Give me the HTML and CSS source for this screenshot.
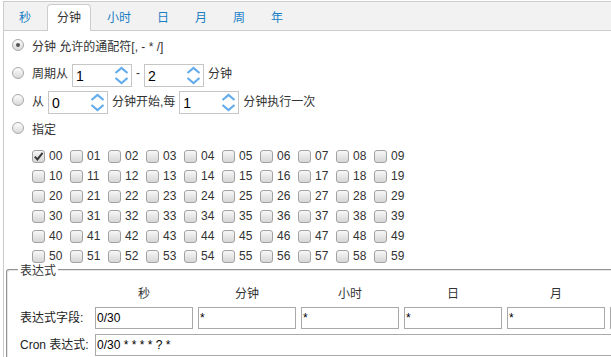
FILE: index.html
```html
<!DOCTYPE html>
<html lang="zh-CN">
<head>
<meta charset="utf-8">
<title>Cron 表达式</title>
<link rel="stylesheet" href="styles.css">
</head>
<body>
<div class="page">
  <div class="tabs">
    <span class="tab">秒</span>
    <span class="tab active">分钟</span>
    <span class="tab">小时</span>
    <span class="tab">日</span>
    <span class="tab">月</span>
    <span class="tab">周</span>
    <span class="tab">年</span>
  </div>

  <div class="opt r1"><span class="radio checked"></span><span>分钟 允许的通配符[, - * /]</span></div>
  <div class="opt r2"><span class="radio"></span><span>周期从</span>
    <span class="spin"><span class="val">1</span><svg class="arr" width="17" height="21" viewBox="0 0 17 21"><polyline points="1.5,8 7.5,3 13.5,8"/><polyline points="1.5,13 7.5,18 13.5,13"/></svg></span>
    <span>-</span>
    <span class="spin"><span class="val">2</span><svg class="arr" width="17" height="21" viewBox="0 0 17 21"><polyline points="1.5,8 7.5,3 13.5,8"/><polyline points="1.5,13 7.5,18 13.5,13"/></svg></span>
    <span>分钟</span>
  </div>
  <div class="opt r3"><span class="radio"></span><span>从</span>
    <span class="spin"><span class="val">0</span><svg class="arr" width="17" height="21" viewBox="0 0 17 21"><polyline points="1.5,8 7.5,3 13.5,8"/><polyline points="1.5,13 7.5,18 13.5,13"/></svg></span>
    <span>分钟开始,每</span>
    <span class="spin"><span class="val">1</span><svg class="arr" width="17" height="21" viewBox="0 0 17 21"><polyline points="1.5,8 7.5,3 13.5,8"/><polyline points="1.5,13 7.5,18 13.5,13"/></svg></span>
    <span>分钟执行一次</span>
  </div>
  <div class="opt r4"><span class="radio"></span><span>指定</span></div>

  <div class="grid">
    <span class="cell"><span class="cb on"><svg width="11" height="11" viewBox="0 0 11 11"><path d="M1.8 5.6 L4.4 8.4 L9.6 1.8"/></svg></span>00</span>
    <span class="cell"><span class="cb"></span>01</span>
    <span class="cell"><span class="cb"></span>02</span>
    <span class="cell"><span class="cb"></span>03</span>
    <span class="cell"><span class="cb"></span>04</span>
    <span class="cell"><span class="cb"></span>05</span>
    <span class="cell"><span class="cb"></span>06</span>
    <span class="cell"><span class="cb"></span>07</span>
    <span class="cell"><span class="cb"></span>08</span>
    <span class="cell"><span class="cb"></span>09</span>
    <span class="cell"><span class="cb"></span>10</span>
    <span class="cell"><span class="cb"></span>11</span>
    <span class="cell"><span class="cb"></span>12</span>
    <span class="cell"><span class="cb"></span>13</span>
    <span class="cell"><span class="cb"></span>14</span>
    <span class="cell"><span class="cb"></span>15</span>
    <span class="cell"><span class="cb"></span>16</span>
    <span class="cell"><span class="cb"></span>17</span>
    <span class="cell"><span class="cb"></span>18</span>
    <span class="cell"><span class="cb"></span>19</span>
    <span class="cell"><span class="cb"></span>20</span>
    <span class="cell"><span class="cb"></span>21</span>
    <span class="cell"><span class="cb"></span>22</span>
    <span class="cell"><span class="cb"></span>23</span>
    <span class="cell"><span class="cb"></span>24</span>
    <span class="cell"><span class="cb"></span>25</span>
    <span class="cell"><span class="cb"></span>26</span>
    <span class="cell"><span class="cb"></span>27</span>
    <span class="cell"><span class="cb"></span>28</span>
    <span class="cell"><span class="cb"></span>29</span>
    <span class="cell"><span class="cb"></span>30</span>
    <span class="cell"><span class="cb"></span>31</span>
    <span class="cell"><span class="cb"></span>32</span>
    <span class="cell"><span class="cb"></span>33</span>
    <span class="cell"><span class="cb"></span>34</span>
    <span class="cell"><span class="cb"></span>35</span>
    <span class="cell"><span class="cb"></span>36</span>
    <span class="cell"><span class="cb"></span>37</span>
    <span class="cell"><span class="cb"></span>38</span>
    <span class="cell"><span class="cb"></span>39</span>
    <span class="cell"><span class="cb"></span>40</span>
    <span class="cell"><span class="cb"></span>41</span>
    <span class="cell"><span class="cb"></span>42</span>
    <span class="cell"><span class="cb"></span>43</span>
    <span class="cell"><span class="cb"></span>44</span>
    <span class="cell"><span class="cb"></span>45</span>
    <span class="cell"><span class="cb"></span>46</span>
    <span class="cell"><span class="cb"></span>47</span>
    <span class="cell"><span class="cb"></span>48</span>
    <span class="cell"><span class="cb"></span>49</span>
    <span class="cell"><span class="cb"></span>50</span>
    <span class="cell"><span class="cb"></span>51</span>
    <span class="cell"><span class="cb"></span>52</span>
    <span class="cell"><span class="cb"></span>53</span>
    <span class="cell"><span class="cb"></span>54</span>
    <span class="cell"><span class="cb"></span>55</span>
    <span class="cell"><span class="cb"></span>56</span>
    <span class="cell"><span class="cb"></span>57</span>
    <span class="cell"><span class="cb"></span>58</span>
    <span class="cell"><span class="cb"></span>59</span>
  </div>

  <fieldset class="expr">
    <legend>表达式</legend>
    <div class="fields">
      <span></span>
      <span class="head">秒</span>
      <span class="head">分钟</span>
      <span class="head">小时</span>
      <span class="head">日</span>
      <span class="head">月</span>
      <span class="head"></span>

      <span class="lbl">表达式字段:</span>
      <span class="box">0/30</span>
      <span class="box">*</span>
      <span class="box">*</span>
      <span class="box">*</span>
      <span class="box">*</span>
      <span class="box"></span>

      <span class="lbl">Cron 表达式:</span>
      <span class="box cron">0/30 * * * * ? *</span>
    </div>
  </fieldset>
</div>
</body>
</html>
```

FILE: styles.css
```css
html, body {
  margin: 0;
  padding: 0;
  overflow: hidden;
  background: #fff;
}

body {
  font-family: "Liberation Sans", "Noto Sans CJK SC", sans-serif;
  font-size: 12px;
  color: #333;
}

.page {
  margin: 1px 0 0 3px;
  border-left: 1px solid #ccc;
  width: 900px;
  height: 420px;
}

/* tabs */
.tabs {
  display: flex;
  align-items: flex-end;
  gap: 6px;
  height: 28px;
  padding-left: 5px;
  border-top: 1px solid #ccc;
  border-bottom: 1px solid #ccc;
  background: #f2f2f2;
}

.tab {
  font-family: "Noto Sans CJK SC", sans-serif;
  font-size: 12px;
  line-height: 24px;
  padding: 0 9px 2px;
  margin-bottom: -1px;
  border: 1px solid transparent;
  border-bottom: 0;
  border-radius: 4px 4px 0 0;
  color: #1a7ec6;
}

.tab.active {
  background: #fff;
  border-color: #ccc;
  color: #333;
}

/* option rows */
.opt {
  display: flex;
  align-items: center;
  gap: 4px;
  padding-left: 8px;
}

.r1 { height: 28px; }
.r2 { height: 27px; }
.r3 { height: 28px; }
.r4 { height: 28px; }

.radio {
  width: 12px;
  height: 12px;
  box-sizing: border-box;
  border: 1px solid #a8a8a8;
  border-radius: 50%;
  background: linear-gradient(#fdfdfd, #d9d9d9);
  margin-right: 4px;
  display: flex;
  align-items: center;
  justify-content: center;
}

.radio.checked::after {
  content: "";
  width: 4px;
  height: 4px;
  border-radius: 50%;
  background: #555;
}

.spin {
  display: flex;
  width: 60px;
  height: 23px;
  box-sizing: border-box;
  margin-top: 5px;
  border: 1px solid #c6c6c6;
  background: #fff;
}

.spin .val {
  flex: 1;
  padding-left: 3px;
  font-size: 14px;
  line-height: 22px;
  color: #000;
}

.arr polyline {
  fill: none;
  stroke: #63acec;
  stroke-width: 2.2;
}

/* minute grid */
.grid {
  display: grid;
  grid-template-columns: repeat(10, 38px);
  grid-auto-rows: 20px;
  padding-left: 28px;
  margin-top: 4px;
}

.cell {
  display: flex;
  align-items: center;
  gap: 4px;
  color: #333;
}

.cb {
  width: 13px;
  height: 13px;
  box-sizing: border-box;
  border: 1px solid #a2a2a2;
  border-radius: 3px;
  background: linear-gradient(#f7f7f7, #d6d6d6);
  display: flex;
  align-items: center;
  justify-content: center;
}

.cb svg path {
  fill: none;
  stroke: #3a3a3a;
  stroke-width: 2;
}

/* expression fieldset */
.expr {
  margin: -3px 0 0 2px;
  padding: 6px 12px 4px;
  border: 2px groove #e6e6e6;
  border-radius: 3px;
  width: 860px;
  box-sizing: border-box;
}

.expr legend {
  font-family: "Noto Sans CJK SC", sans-serif;
  font-size: 12px;
  line-height: 14px;
  padding: 0 2px;
  margin-left: -2px;
  color: #333;
}

.fields {
  display: grid;
  grid-template-columns: 70px repeat(6, 98px);
  grid-template-rows: 19px 22px 22px;
  column-gap: 5px;
  row-gap: 5px;
}

.head {
  font-family: "Noto Sans CJK SC", sans-serif;
  text-align: center;
  line-height: 19px;
}

.lbl {
  line-height: 22px;
  white-space: nowrap;
  color: #222;
}

.box {
  box-sizing: border-box;
  height: 22px;
  border: 1px solid #a9a9a9;
  padding-left: 1px;
  line-height: 20px;
  color: #000;
  background: #fff;
}

.box.cron {
  grid-column: 2 / -1;
}
```
